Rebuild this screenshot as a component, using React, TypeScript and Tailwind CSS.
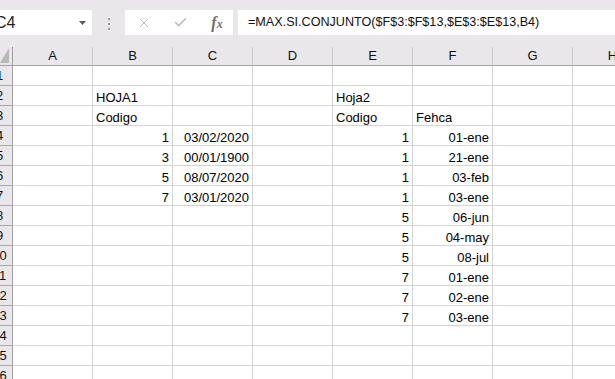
import { Check, X } from "lucide-react";

const columns = ["A", "B", "C", "D", "E", "F", "G", "H"];

type Cell = { text: string; align?: "left" | "right" };

// rows keyed by row number, cells keyed by column letter
const data: Record<number, Record<string, Cell>> = {
  2: { B: { text: "HOJA1" }, E: { text: "Hoja2" } },
  3: { B: { text: "Codigo" }, E: { text: "Codigo" }, F: { text: "Fehca" } },
  4: {
    B: { text: "1", align: "right" },
    C: { text: "03/02/2020", align: "right" },
    E: { text: "1", align: "right" },
    F: { text: "01-ene", align: "right" },
  },
  5: {
    B: { text: "3", align: "right" },
    C: { text: "00/01/1900", align: "right" },
    E: { text: "1", align: "right" },
    F: { text: "21-ene", align: "right" },
  },
  6: {
    B: { text: "5", align: "right" },
    C: { text: "08/07/2020", align: "right" },
    E: { text: "1", align: "right" },
    F: { text: "03-feb", align: "right" },
  },
  7: {
    B: { text: "7", align: "right" },
    C: { text: "03/01/2020", align: "right" },
    E: { text: "1", align: "right" },
    F: { text: "03-ene", align: "right" },
  },
  8: { E: { text: "5", align: "right" }, F: { text: "06-jun", align: "right" } },
  9: { E: { text: "5", align: "right" }, F: { text: "04-may", align: "right" } },
  10: { E: { text: "5", align: "right" }, F: { text: "08-jul", align: "right" } },
  11: { E: { text: "7", align: "right" }, F: { text: "01-ene", align: "right" } },
  12: { E: { text: "7", align: "right" }, F: { text: "02-ene", align: "right" } },
  13: { E: { text: "7", align: "right" }, F: { text: "03-ene", align: "right" } },
};

const rows = Array.from({ length: 16 }, (_, i) => i + 1);

function FormulaBar() {
  return (
    <div className="flex h-[47px] items-start bg-[#e9e7e9] pt-[10px]">
      <div className="flex h-[25px] w-[92px] items-center justify-between bg-white pr-[6px]">
        <span className="ml-[-5px] text-[16px] leading-none text-[#222]">C4</span>
        <svg width="7" height="4" viewBox="0 0 7 4">
          <path d="M0 0h7L3.5 4z" fill="#5a5a5a" />
        </svg>
      </div>
      <div className="flex w-[33px] flex-col items-center justify-center gap-[3px] pt-[8px]">
        <span className="h-[2px] w-[2px] bg-[#9a9a9a]" />
        <span className="h-[2px] w-[2px] bg-[#9a9a9a]" />
        <span className="h-[2px] w-[2px] bg-[#9a9a9a]" />
      </div>
      <div className="flex h-[25px] w-[108px] items-center bg-white">
        <div className="flex w-[36px] justify-center pl-[1px]">
          <X size={14} strokeWidth={1.6} color="#b4b4b4" />
        </div>
        <div className="flex w-[36px] justify-center pl-[2px]">
          <Check size={15} strokeWidth={2.6} color="#bdbdbd" />
        </div>
        <div className="flex w-[36px] justify-center pl-[4px]">
          <span className="font-['Liberation_Serif',serif] text-[16px] font-bold italic leading-none text-[#6e6e6e]">
            f<span className="text-[12px]">x</span>
          </span>
        </div>
      </div>
      <div className="ml-[5px] flex h-[25px] flex-1 items-center bg-white pl-[10px]">
        <span className="whitespace-nowrap text-[12.6px] text-[#111]">
          =MAX.SI.CONJUNTO($F$3:$F$13,$E$3:$E$13,B4)
        </span>
      </div>
    </div>
  );
}

function Sheet() {
  return (
    <div className="ml-[-13px] grid grid-cols-[26px_repeat(8,80px)]">
      <div className="flex h-[19px] items-end justify-end border-r border-b border-[#a0a0a0] bg-[#e9e7e9] pr-[3px] pb-[2px]">
        <svg width="9" height="15" viewBox="0 0 9 15">
          <path d="M9 0V15H0z" fill="#b8b8b8" />
        </svg>
      </div>
      {columns.map((c) => (
        <div
          key={c}
          className="flex h-[19px] items-center justify-center border-r border-b border-r-[#c9c9c9] border-b-[#a3a3a3] bg-[#e9e7e9] text-[13px] text-[#111]"
        >
          {c}
        </div>
      ))}
      {rows.map((r) => (
        <div key={r} className="contents">
          <div className="flex h-[20px] items-center justify-center border-r border-b border-r-[#a0a0a0] border-b-[#a8a8a8] bg-[#e9e7e9] text-[13px] text-[#111]">
            {r}
          </div>
          {columns.map((c) => {
            const cell = data[r]?.[c];
            return (
              <div
                key={c}
                className={`flex h-[20px] items-end overflow-hidden whitespace-nowrap border-r border-b border-[#d4d4d4] px-[3px] text-[13px] leading-[15px] text-black ${
                  cell?.align === "right" ? "justify-end" : "justify-start"
                }`}
              >
                {cell?.text}
              </div>
            );
          })}
        </div>
      ))}
    </div>
  );
}

export default function App() {
  return (
    <div className="h-[379px] w-[615px] overflow-hidden bg-white font-['Liberation_Sans',Arial,sans-serif]">
      <FormulaBar />
      <Sheet />
    </div>
  );
}
